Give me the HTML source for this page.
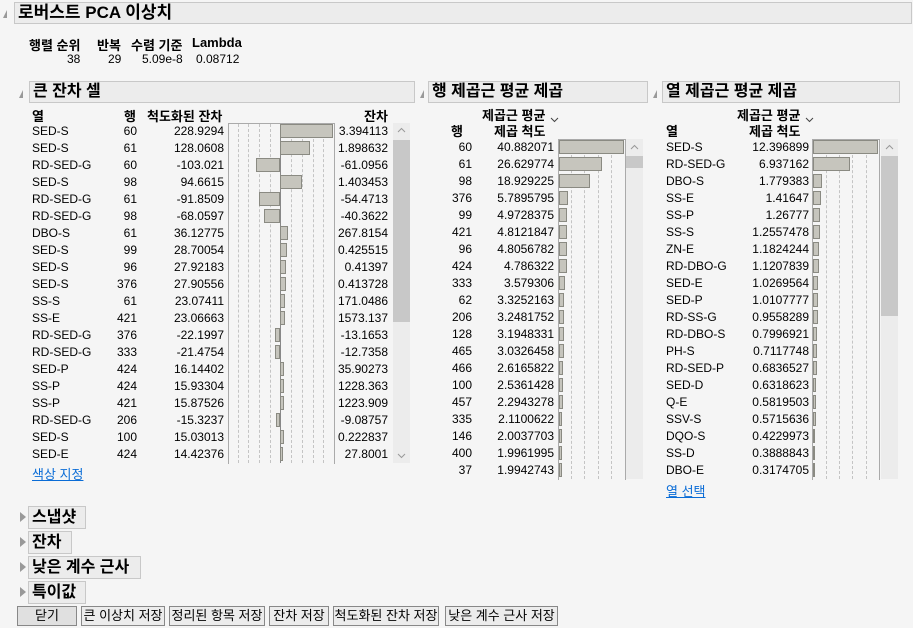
<!DOCTYPE html>
<html><head><meta charset="utf-8"><style>
body{margin:0;width:913px;height:628px;background:#f5f5f5;font-family:"Liberation Sans","Noto Sans CJK KR",sans-serif;font-size:12px;color:#000;position:relative;overflow:hidden}
.a{position:absolute}
.hb{position:absolute;background:#ececec;border:1px solid #c8c8c8;font-weight:bold;font-size:16px;line-height:20px;padding-left:3px;box-sizing:border-box;height:22px}
.tri{position:absolute;width:0;height:0;border-left:4px solid transparent;border-bottom:8px solid #999}
.r{position:absolute;height:17px;line-height:17px;left:0;width:913px}
.r span{position:absolute}
.t1 .c1{left:32px}.t1 .c2{right:776px}.t1 .c3{right:689px}.t1 .c4{right:525px}
.t2 .c2{right:441px}.t2 .c3{right:359px}
.t3 .c1{left:666px}.t3 .c3{right:104px}
.b{position:absolute;top:1px;height:14px;background:#c6c5bd;border:1px solid #8a8a82;box-sizing:border-box}
.dl{position:absolute;width:0;border-left:1px dashed #c4c4c4}
.sl{position:absolute;width:0;border-left:1px solid #888}
.sb{position:absolute;background:#ececec}
.th{position:absolute;background:#c8c8c8}
.btn{position:absolute;top:606px;height:20px;background:#ececec;border:1px solid #888;box-sizing:border-box;line-height:18px;text-align:center;font-size:13px;white-space:nowrap}
.sec{position:absolute;background:#ececec;border:1px solid #c8c8c8;font-weight:bold;font-size:16px;height:23px;line-height:21px;box-sizing:border-box;padding-left:3px}
.rt{position:absolute;width:0;height:0;border-top:5px solid transparent;border-bottom:5px solid transparent;border-left:6px solid #999}
.hd{position:absolute;font-weight:bold;font-size:13px}
</style></head><body>
<div class="tri" style="left:3px;top:10px"></div>
<div class="hb" style="left:14px;top:2px;width:898px;height:22px;font-size:17px">로버스트 PCA 이상치</div>
<div class="hd" style="left:29px;top:35px">행렬 순위</div>
<div class="hd" style="left:97px;top:35px">반복</div>
<div class="hd" style="left:131px;top:35px">수렴 기준</div>
<div class="hd" style="left:192px;top:35px">Lambda</div>
<div class="a" style="left:67px;top:52px">38</div>
<div class="a" style="left:108px;top:52px">29</div>
<div class="a" style="left:142px;top:52px">5.09e-8</div>
<div class="a" style="left:196px;top:52px">0.08712</div>

<div class="tri" style="left:19px;top:90px"></div>
<div class="hb" style="left:29px;top:81px;width:386px">큰 잔차 셀</div>
<div class="tri" style="left:420px;top:90px"></div>
<div class="hb" style="left:428px;top:81px;width:220px">행 제곱근 평균 제곱</div>
<div class="tri" style="left:653px;top:90px"></div>
<div class="hb" style="left:662px;top:81px;width:238px">열 제곱근 평균 제곱</div>

<div class="hd" style="left:32px;top:106px">열</div>
<div class="hd" style="left:124px;top:106px">행</div>
<div class="hd" style="left:147px;top:106px">척도화된 잔차</div>
<div class="hd" style="left:364px;top:106px">잔차</div>
<div class="a" style="left:228px;top:123px;width:105px;height:340px;border-left:1px solid #aaa;border-top:1px solid #aaa;border-right:1px solid #aaa"></div>
<div class="dl" style="left:238px;top:124px;height:339px"></div>
<div class="dl" style="left:248px;top:124px;height:339px"></div>
<div class="dl" style="left:259px;top:124px;height:339px"></div>
<div class="dl" style="left:270px;top:124px;height:339px"></div>
<div class="dl" style="left:291px;top:124px;height:339px"></div>
<div class="dl" style="left:302px;top:124px;height:339px"></div>
<div class="dl" style="left:313px;top:124px;height:339px"></div>
<div class="dl" style="left:323px;top:124px;height:339px"></div>
<div class="sl" style="left:280px;top:124px;height:339px"></div>
<div class="sb" style="left:393px;top:123px;width:17px;height:340px"></div>
<div class="th" style="left:393px;top:140px;width:17px;height:182px"></div>
<svg class="a" style="left:397px;top:127px" width="9" height="6"><path d="M1 5L4.5 1.5L8 5" fill="none" stroke="#999"/></svg>
<svg class="a" style="left:397px;top:453px" width="9" height="6"><path d="M1 1L4.5 4.5L8 1" fill="none" stroke="#999"/></svg>

<div class="t1">
<div class="r" style="top:123px"><span class="c1">SED-S</span><span class="c2">60</span><span class="c3">228.9294</span><div class="b" style="left:280px;width:53px"></div><span class="c4">3.394113</span></div>
<div class="r" style="top:140px"><span class="c1">SED-S</span><span class="c2">61</span><span class="c3">128.0608</span><div class="b" style="left:280px;width:30px"></div><span class="c4">1.898632</span></div>
<div class="r" style="top:157px"><span class="c1">RD-SED-G</span><span class="c2">60</span><span class="c3">-103.021</span><div class="b" style="left:256px;width:24px"></div><span class="c4">-61.0956</span></div>
<div class="r" style="top:174px"><span class="c1">SED-S</span><span class="c2">98</span><span class="c3">94.6615</span><div class="b" style="left:280px;width:22px"></div><span class="c4">1.403453</span></div>
<div class="r" style="top:191px"><span class="c1">RD-SED-G</span><span class="c2">61</span><span class="c3">-91.8509</span><div class="b" style="left:259px;width:21px"></div><span class="c4">-54.4713</span></div>
<div class="r" style="top:208px"><span class="c1">RD-SED-G</span><span class="c2">98</span><span class="c3">-68.0597</span><div class="b" style="left:264px;width:16px"></div><span class="c4">-40.3622</span></div>
<div class="r" style="top:225px"><span class="c1">DBO-S</span><span class="c2">61</span><span class="c3">36.12775</span><div class="b" style="left:280px;width:8px"></div><span class="c4">267.8154</span></div>
<div class="r" style="top:242px"><span class="c1">SED-S</span><span class="c2">99</span><span class="c3">28.70054</span><div class="b" style="left:280px;width:7px"></div><span class="c4">0.425515</span></div>
<div class="r" style="top:259px"><span class="c1">SED-S</span><span class="c2">96</span><span class="c3">27.92183</span><div class="b" style="left:280px;width:6px"></div><span class="c4">0.41397</span></div>
<div class="r" style="top:276px"><span class="c1">SED-S</span><span class="c2">376</span><span class="c3">27.90556</span><div class="b" style="left:280px;width:6px"></div><span class="c4">0.413728</span></div>
<div class="r" style="top:293px"><span class="c1">SS-S</span><span class="c2">61</span><span class="c3">23.07411</span><div class="b" style="left:280px;width:5px"></div><span class="c4">171.0486</span></div>
<div class="r" style="top:310px"><span class="c1">SS-E</span><span class="c2">421</span><span class="c3">23.06663</span><div class="b" style="left:280px;width:5px"></div><span class="c4">1573.137</span></div>
<div class="r" style="top:327px"><span class="c1">RD-SED-G</span><span class="c2">376</span><span class="c3">-22.1997</span><div class="b" style="left:275px;width:5px"></div><span class="c4">-13.1653</span></div>
<div class="r" style="top:344px"><span class="c1">RD-SED-G</span><span class="c2">333</span><span class="c3">-21.4754</span><div class="b" style="left:275px;width:5px"></div><span class="c4">-12.7358</span></div>
<div class="r" style="top:361px"><span class="c1">SED-P</span><span class="c2">424</span><span class="c3">16.14402</span><div class="b" style="left:280px;width:4px"></div><span class="c4">35.90273</span></div>
<div class="r" style="top:378px"><span class="c1">SS-P</span><span class="c2">424</span><span class="c3">15.93304</span><div class="b" style="left:280px;width:4px"></div><span class="c4">1228.363</span></div>
<div class="r" style="top:395px"><span class="c1">SS-P</span><span class="c2">421</span><span class="c3">15.87526</span><div class="b" style="left:280px;width:4px"></div><span class="c4">1223.909</span></div>
<div class="r" style="top:412px"><span class="c1">RD-SED-G</span><span class="c2">206</span><span class="c3">-15.3237</span><div class="b" style="left:276px;width:4px"></div><span class="c4">-9.08757</span></div>
<div class="r" style="top:429px"><span class="c1">SED-S</span><span class="c2">100</span><span class="c3">15.03013</span><div class="b" style="left:280px;width:4px"></div><span class="c4">0.222837</span></div>
<div class="r" style="top:446px"><span class="c1">SED-E</span><span class="c2">424</span><span class="c3">14.42376</span><div class="b" style="left:280px;width:3px"></div><span class="c4">27.8001</span></div>
</div>
<div class="a" style="left:32px;top:464px;color:#0a6cd6;text-decoration:underline;font-size:13px">색상 지정</div>

<div class="hd" style="left:482px;top:105px">제곱근 평균</div>
<div class="hd" style="left:451px;top:121px">행</div>
<div class="hd" style="left:494px;top:121px">제곱 척도</div>
<svg class="a" style="left:550px;top:117px" width="9" height="6"><path d="M1 1L4.5 4.5L8 1" fill="none" stroke="#444"/></svg>
<div class="a" style="left:558px;top:139px;width:66px;height:340px;border-left:1px solid #aaa;border-top:1px solid #aaa;border-right:1px solid #aaa"></div>
<div class="dl" style="left:571px;top:140px;height:339px"></div>
<div class="dl" style="left:584px;top:140px;height:339px"></div>
<div class="dl" style="left:598px;top:140px;height:339px"></div>
<div class="dl" style="left:611px;top:140px;height:339px"></div>
<div class="sb" style="left:626px;top:139px;width:17px;height:340px"></div>
<div class="th" style="left:626px;top:156px;width:17px;height:12px"></div>
<svg class="a" style="left:630px;top:144px" width="9" height="6"><path d="M1 5L4.5 1.5L8 5" fill="none" stroke="#999"/></svg>
<div class="t2">
<div class="r" style="top:139px"><span class="c2">60</span><span class="c3">40.882071</span><div class="b" style="left:559px;width:65px"></div></div>
<div class="r" style="top:156px"><span class="c2">61</span><span class="c3">26.629774</span><div class="b" style="left:559px;width:43px"></div></div>
<div class="r" style="top:173px"><span class="c2">98</span><span class="c3">18.929225</span><div class="b" style="left:559px;width:31px"></div></div>
<div class="r" style="top:190px"><span class="c2">376</span><span class="c3">5.7895795</span><div class="b" style="left:559px;width:9px"></div></div>
<div class="r" style="top:207px"><span class="c2">99</span><span class="c3">4.9728375</span><div class="b" style="left:559px;width:8px"></div></div>
<div class="r" style="top:224px"><span class="c2">421</span><span class="c3">4.8121847</span><div class="b" style="left:559px;width:8px"></div></div>
<div class="r" style="top:241px"><span class="c2">96</span><span class="c3">4.8056782</span><div class="b" style="left:559px;width:8px"></div></div>
<div class="r" style="top:258px"><span class="c2">424</span><span class="c3">4.786322</span><div class="b" style="left:559px;width:8px"></div></div>
<div class="r" style="top:275px"><span class="c2">333</span><span class="c3">3.579306</span><div class="b" style="left:559px;width:6px"></div></div>
<div class="r" style="top:292px"><span class="c2">62</span><span class="c3">3.3252163</span><div class="b" style="left:559px;width:5px"></div></div>
<div class="r" style="top:309px"><span class="c2">206</span><span class="c3">3.2481752</span><div class="b" style="left:559px;width:5px"></div></div>
<div class="r" style="top:326px"><span class="c2">128</span><span class="c3">3.1948331</span><div class="b" style="left:559px;width:5px"></div></div>
<div class="r" style="top:343px"><span class="c2">465</span><span class="c3">3.0326458</span><div class="b" style="left:559px;width:5px"></div></div>
<div class="r" style="top:360px"><span class="c2">466</span><span class="c3">2.6165822</span><div class="b" style="left:559px;width:4px"></div></div>
<div class="r" style="top:377px"><span class="c2">100</span><span class="c3">2.5361428</span><div class="b" style="left:559px;width:4px"></div></div>
<div class="r" style="top:394px"><span class="c2">457</span><span class="c3">2.2943278</span><div class="b" style="left:559px;width:4px"></div></div>
<div class="r" style="top:411px"><span class="c2">335</span><span class="c3">2.1100622</span><div class="b" style="left:559px;width:3px"></div></div>
<div class="r" style="top:428px"><span class="c2">146</span><span class="c3">2.0037703</span><div class="b" style="left:559px;width:3px"></div></div>
<div class="r" style="top:445px"><span class="c2">400</span><span class="c3">1.9961995</span><div class="b" style="left:559px;width:3px"></div></div>
<div class="r" style="top:462px"><span class="c2">37</span><span class="c3">1.9942743</span><div class="b" style="left:559px;width:3px"></div></div>
</div>

<div class="hd" style="left:737px;top:105px">제곱근 평균</div>
<div class="hd" style="left:666px;top:121px">열</div>
<div class="hd" style="left:749px;top:121px">제곱 척도</div>
<svg class="a" style="left:805px;top:117px" width="9" height="6"><path d="M1 1L4.5 4.5L8 1" fill="none" stroke="#444"/></svg>
<div class="a" style="left:812px;top:139px;width:66px;height:340px;border-left:1px solid #aaa;border-top:1px solid #aaa;border-right:1px solid #aaa"></div>
<div class="dl" style="left:826px;top:140px;height:339px"></div>
<div class="dl" style="left:839px;top:140px;height:339px"></div>
<div class="dl" style="left:852px;top:140px;height:339px"></div>
<div class="dl" style="left:866px;top:140px;height:339px"></div>
<div class="sb" style="left:881px;top:139px;width:17px;height:340px"></div>
<div class="th" style="left:881px;top:156px;width:17px;height:160px"></div>
<svg class="a" style="left:885px;top:144px" width="9" height="6"><path d="M1 5L4.5 1.5L8 5" fill="none" stroke="#999"/></svg>
<div class="t3">
<div class="r" style="top:139px"><span class="c1">SED-S</span><span class="c3">12.396899</span><div class="b" style="left:813px;width:65px"></div></div>
<div class="r" style="top:156px"><span class="c1">RD-SED-G</span><span class="c3">6.937162</span><div class="b" style="left:813px;width:37px"></div></div>
<div class="r" style="top:173px"><span class="c1">DBO-S</span><span class="c3">1.779383</span><div class="b" style="left:813px;width:9px"></div></div>
<div class="r" style="top:190px"><span class="c1">SS-E</span><span class="c3">1.41647</span><div class="b" style="left:813px;width:8px"></div></div>
<div class="r" style="top:207px"><span class="c1">SS-P</span><span class="c3">1.26777</span><div class="b" style="left:813px;width:7px"></div></div>
<div class="r" style="top:224px"><span class="c1">SS-S</span><span class="c3">1.2557478</span><div class="b" style="left:813px;width:7px"></div></div>
<div class="r" style="top:241px"><span class="c1">ZN-E</span><span class="c3">1.1824244</span><div class="b" style="left:813px;width:6px"></div></div>
<div class="r" style="top:258px"><span class="c1">RD-DBO-G</span><span class="c3">1.1207839</span><div class="b" style="left:813px;width:6px"></div></div>
<div class="r" style="top:275px"><span class="c1">SED-E</span><span class="c3">1.0269564</span><div class="b" style="left:813px;width:5px"></div></div>
<div class="r" style="top:292px"><span class="c1">SED-P</span><span class="c3">1.0107777</span><div class="b" style="left:813px;width:5px"></div></div>
<div class="r" style="top:309px"><span class="c1">RD-SS-G</span><span class="c3">0.9558289</span><div class="b" style="left:813px;width:5px"></div></div>
<div class="r" style="top:326px"><span class="c1">RD-DBO-S</span><span class="c3">0.7996921</span><div class="b" style="left:813px;width:4px"></div></div>
<div class="r" style="top:343px"><span class="c1">PH-S</span><span class="c3">0.7117748</span><div class="b" style="left:813px;width:4px"></div></div>
<div class="r" style="top:360px"><span class="c1">RD-SED-P</span><span class="c3">0.6836527</span><div class="b" style="left:813px;width:4px"></div></div>
<div class="r" style="top:377px"><span class="c1">SED-D</span><span class="c3">0.6318623</span><div class="b" style="left:813px;width:3px"></div></div>
<div class="r" style="top:394px"><span class="c1">Q-E</span><span class="c3">0.5819503</span><div class="b" style="left:813px;width:3px"></div></div>
<div class="r" style="top:411px"><span class="c1">SSV-S</span><span class="c3">0.5715636</span><div class="b" style="left:813px;width:3px"></div></div>
<div class="r" style="top:428px"><span class="c1">DQO-S</span><span class="c3">0.4229973</span><div class="b" style="left:813px;width:2px"></div></div>
<div class="r" style="top:445px"><span class="c1">SS-D</span><span class="c3">0.3888843</span><div class="b" style="left:813px;width:2px"></div></div>
<div class="r" style="top:462px"><span class="c1">DBO-E</span><span class="c3">0.3174705</span><div class="b" style="left:813px;width:2px"></div></div>
</div>
<div class="a" style="left:666px;top:481px;color:#0a6cd6;text-decoration:underline;font-size:13px">열 선택</div>

<div class="rt" style="left:20px;top:512px"></div><div class="sec" style="left:28px;top:506px;width:58px">스냅샷</div>
<div class="rt" style="left:20px;top:537px"></div><div class="sec" style="left:28px;top:531px;width:44px">잔차</div>
<div class="rt" style="left:20px;top:562px"></div><div class="sec" style="left:28px;top:556px;width:113px">낮은 계수 근사</div>
<div class="rt" style="left:20px;top:587px"></div><div class="sec" style="left:28px;top:581px;width:58px">특이값</div>

<div class="btn" style="left:17px;width:60px;background:#e0e0e0">닫기</div>
<div class="btn" style="left:81px;width:84px">큰 이상치 저장</div>
<div class="btn" style="left:169px;width:96px">정리된 항목 저장</div>
<div class="btn" style="left:269px;width:60px">잔차 저장</div>
<div class="btn" style="left:333px;width:106px">척도화된 잔차 저장</div>
<div class="btn" style="left:445px;width:113px">낮은 계수 근사 저장</div>
</body></html>
